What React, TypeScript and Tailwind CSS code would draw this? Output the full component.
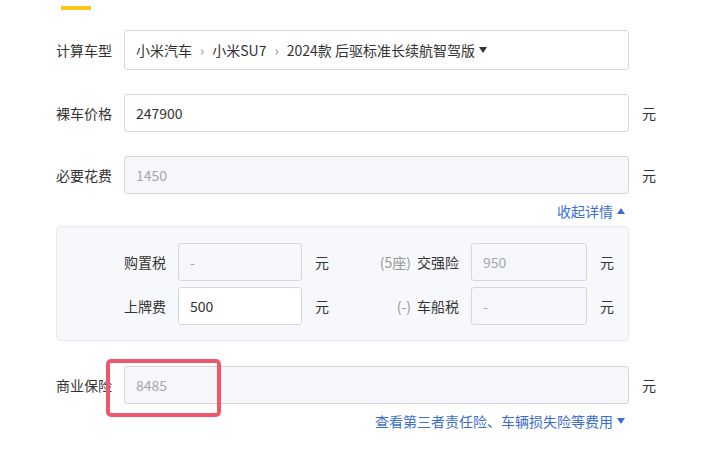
import React from 'react';

const font = { fontFamily: '"Noto Sans CJK SC", "Noto Sans", sans-serif' };

function Caret({ up = false }: { up?: boolean }) {
  return (
    <svg width="8" height="6" viewBox="0 0 8 6" className="inline-block ml-1">
      {up ? <path d="M0 6 L4 0 L8 6 Z" fill="currentColor" /> : <path d="M0 0 L8 0 L4 6 Z" fill="currentColor" />}
    </svg>
  );
}

function Unit() {
  return <span className="ml-[13px] text-sm text-[#333]">元</span>;
}

function Field({
  value,
  disabled = false,
  className = '',
}: {
  value: string;
  disabled?: boolean;
  className?: string;
}) {
  return (
    <div
      className={`h-[38px] flex items-center px-[11px] border rounded-[3px] text-sm ${
        disabled ? 'bg-[#f6f7fa] border-[#d3d6dc] text-[#a3a7ae]' : 'bg-white border-[#d3d6dc] text-[#333]'
      } ${className}`}
    >
      {value}
    </div>
  );
}

function Row({ label, children }: { label: string; children: React.ReactNode }) {
  return (
    <div className="flex items-center pl-[56px]">
      <div className="w-[68px] text-sm text-[#333]">{label}</div>
      {children}
    </div>
  );
}

function PanelItem({
  label,
  prefix,
  value,
  disabled,
  labelW,
  inputW,
}: {
  label: string;
  prefix?: string;
  value: string;
  disabled?: boolean;
  labelW: string;
  inputW: string;
}) {
  return (
    <div className="flex items-center">
      <div className={`${labelW} text-right text-sm text-[#333]`}>
        {prefix && <span className="text-[#999] mr-[6px]">{prefix}</span>}
        {label}
      </div>
      <Field value={value} disabled={disabled} className={`ml-[12px] ${inputW}`} />
      <span className="ml-[13px] w-[14px] text-sm text-[#333]">元</span>
    </div>
  );
}

export default function App() {
  return (
    <div className="w-[712px] h-[457px] bg-white overflow-hidden" style={font}>
      <div className="ml-[61px] mt-[6px] w-[30px] h-[4px] bg-[#f9c71c]" />

      <div className="mt-[20px]">
        <Row label="计算车型">
          <div className="w-[505px] h-[40px] flex items-center px-[11px] border border-[#d3d6dc] rounded-[3px] text-sm text-[#333]">
            <span>小米汽车</span>
            <span className="mx-[8px] text-[#888]">›</span>
            <span>小米SU7</span>
            <span className="mx-[8px] text-[#888]">›</span>
            <span>2024款 后驱标准长续航智驾版</span>
            <Caret />
          </div>
        </Row>
      </div>

      <div className="mt-[24px]">
        <Row label="裸车价格">
          <Field value="247900" className="w-[505px]" />
          <Unit />
        </Row>
      </div>

      <div className="mt-[24px]">
        <Row label="必要花费">
          <Field value="1450" disabled className="w-[505px]" />
          <Unit />
        </Row>
      </div>

      <div className="mt-[7px] w-[629px] flex justify-end">
        <span className="text-sm leading-5 text-[#3b6dd4] flex items-center pr-[4px]">
          收起详情
          <Caret up />
        </span>
      </div>

      <div className="mt-[5px] ml-[56px] w-[573px] h-[115px] bg-[#f7f8fb] border border-[#e7e9ee] rounded-[4px] pt-[16px] flex flex-col gap-[6px]">
        <div className="flex items-center">
          <PanelItem label="购置税" value="-" disabled labelW="w-[109px]" inputW="w-[124px]" />
          <PanelItem label="交强险" prefix="(5座)" value="950" disabled labelW="w-[130px]" inputW="w-[116px]" />
        </div>
        <div className="flex items-center">
          <PanelItem label="上牌费" value="500" labelW="w-[109px]" inputW="w-[124px]" />
          <PanelItem label="车船税" prefix="(-)" value="-" disabled labelW="w-[130px]" inputW="w-[116px]" />
        </div>
      </div>

      <div className="mt-[25px]">
        <Row label="商业保险">
          <div className="relative">
            <Field value="8485" disabled className="w-[505px]" />
            <div className="absolute left-[-18px] top-[-7px] w-[115px] h-[58px] border-[4px] border-[#f2566b] rounded-[5px]" />
          </div>
          <Unit />
        </Row>
      </div>

      <div className="mt-[7px] w-[629px] flex justify-end">
        <span className="text-sm leading-5 text-[#3b6dd4] flex items-center pr-[4px]">
          查看第三者责任险、车辆损失险等费用
          <Caret />
        </span>
      </div>
    </div>
  );
}
